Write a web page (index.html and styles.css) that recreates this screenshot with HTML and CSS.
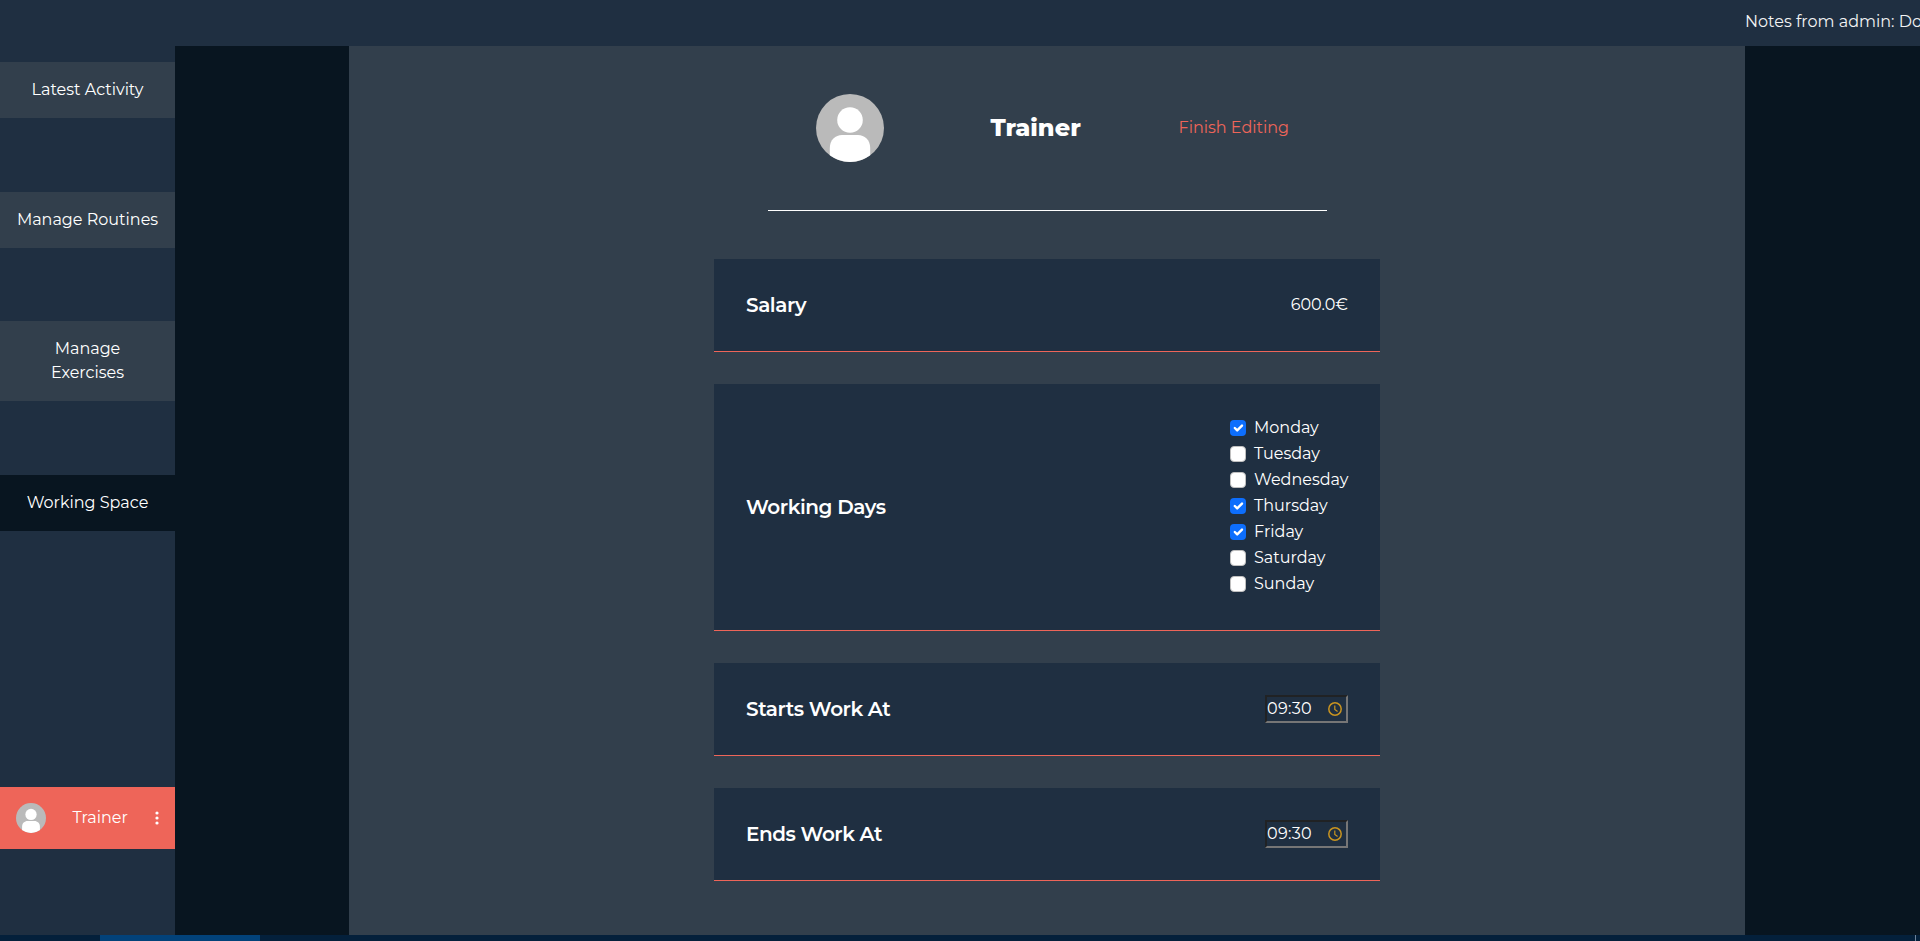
FILE: index.html
```html
<!DOCTYPE html>
<html lang="en">
<head>
<meta charset="utf-8">
<title>Working Space</title>
<link rel="stylesheet" href="styles.css">
</head>
<body>
<svg class="defs" aria-hidden="true">
  <symbol id="avatar" viewBox="0 0 68 68">
    <circle cx="34" cy="34" r="34" fill="#bababa"/>
    <circle cx="34" cy="26" r="12.800" fill="#fff"/>
    <path d="M13.800 61.300V54C13.800 46 19.500 41 26 41H42C48.500 41 54.200 46 54.200 54V61.300A34 34 0 0 1 13.800 61.300Z" fill="#fff"/>
  </symbol>
  <symbol id="clock" viewBox="0 0 14 14">
    <circle cx="7" cy="7" r="6.200" fill="none" stroke="#c99420" stroke-width="1.500"/>
    <path d="M6.800 3.500V7.400L9.600 9.400" fill="none" stroke="#c99420" stroke-width="1.200"/>
  </symbol>
  <symbol id="tick" viewBox="0 0 20 20">
    <path d="M6 10l3 3l6-6" fill="none" stroke="#fff" stroke-width="3" stroke-linecap="round" stroke-linejoin="round"/>
  </symbol>
</svg>
<div class="app">
  <header class="topbar"><div class="ticker">Notes from admin: Do</div></header>
  <div class="body">
    <nav class="sidebar">
      <a class="nav-item">Latest Activity</a>
      <a class="nav-item">Manage Routines</a>
      <a class="nav-item"><span>Manage</span><span>Exercises</span></a>
      <a class="nav-item active">Working Space</a>
      <div class="user">
        <svg class="user-avatar"><use href="#avatar"/></svg>
        <span class="user-name">Trainer</span>
        <svg class="dots" viewBox="0 0 4 14"><circle cx="2" cy="2" r="1.600"/><circle cx="2" cy="7" r="1.600"/><circle cx="2" cy="12" r="1.600"/></svg>
      </div>
    </nav>
    <main class="content">
      <section class="profile">
        <svg class="profile-avatar"><use href="#avatar"/></svg>
        <h1>Trainer</h1>
        <a class="finish">Finish Editing</a>
      </section>
      <section class="card"><h2>Salary</h2><span>600.0€</span></section>
      <section class="card days-card"><h2>Working Days</h2>
        <ul class="days">
          <li><svg class="check on"><use href="#tick"/></svg>Monday</li>
          <li><svg class="check"></svg>Tuesday</li>
          <li><svg class="check"></svg>Wednesday</li>
          <li><svg class="check on"><use href="#tick"/></svg>Thursday</li>
          <li><svg class="check on"><use href="#tick"/></svg>Friday</li>
          <li><svg class="check"></svg>Saturday</li>
          <li><svg class="check"></svg>Sunday</li>
        </ul>
      </section>
      <section class="card"><h2>Starts Work At</h2><div class="time"><span>09:30</span><svg><use href="#clock"/></svg></div></section>
      <section class="card"><h2>Ends Work At</h2><div class="time"><span>09:30</span><svg><use href="#clock"/></svg></div></section>
    </main>
  </div>
  <footer class="taskbar"><div class="task"></div><div class="edge"></div></footer>
</div>
</body>
</html>
```
FILE: styles.css
```css
* { box-sizing: border-box; }
body { margin: 0; overflow: hidden; color: #fff; font: 400 16px/24px Montserrat, Inter, sans-serif; }
h1, h2, ul { margin: 0; padding: 0; }
.defs { display: block; width: 0; height: 0; }
.app { display: flex; flex-direction: column; width: 1920px; height: 941px; background: #081520; overflow: hidden; }
.topbar { height: 46px; flex: none; background: #1f2f41; overflow: hidden; }
.ticker { margin-left: 1745px; padding-top: 10px; white-space: nowrap; color: #f2f3f4; }
.body { display: flex; height: 889px; flex: none; }
.sidebar { width: 175px; flex: none; padding-top: 16px; background: #1f2f41; display: flex; flex-direction: column; }
.nav-item { display: flex; flex-direction: column; align-items: center; padding: 16px 0; margin-bottom: 74px; background: #323f4c; white-space: nowrap; }
.nav-item:nth-child(2) { margin-bottom: 73px; }
.nav-item.active { background: #081520; margin-bottom: 256px; }
.user { height: 62px; background: #ee6559; display: flex; align-items: center; padding: 0 16px; }
.user-avatar { width: 30px; height: 30px; flex: none; }
.user-name { margin-left: 26.5px; width: 56px; }
.dots { width: 4px; height: 14px; margin-left: 26.5px; fill: #fff; flex: none; }
.content { width: 1396px; margin-left: 174px; background: #323f4c; display: flex; flex-direction: column; align-items: center; gap: 32px; }
.profile { width: 559px; height: 165px; padding: 48px 0 0 48px; margin-bottom: 16px; border-bottom: 1px solid #fff; display: flex; align-items: flex-start; }
.profile-avatar { width: 68px; height: 68px; flex: none; }
.profile h1 { width: 188px; margin-left: 107px; font-size: 24px; font-weight: 800; line-height: 30px; padding-top: 19px; }
.finish { color: #ee6559; padding-top: 22px; white-space: nowrap; }
.card { width: 666px; height: 93px; padding: 0 32px; background: #1f2f41; border-bottom: 1px solid #ee6559; display: flex; align-items: center; justify-content: space-between; white-space: nowrap; }
.card h2 { font-size: 20px; font-weight: 600; line-height: 24px; letter-spacing: -0.43px; }
.days-card { height: 247px; }
.days { list-style: none; width: 118px; }
.days li { height: 26px; display: flex; gap: 8px; }
.check { width: 16px; height: 16px; margin-top: 4px; flex: none; background: #fff; border: 1px solid #bfbfbf; border-radius: 4px; }
.check.on { background: #0d6efd; border: 0; }
.time { width: 83px; height: 28px; border: 2px solid; border-color: #202224 #767676 #767676 #202224; display: flex; align-items: center; justify-content: space-between; padding-right: 4px; letter-spacing: 0.3px; }
.time svg { width: 14px; height: 14px; }
.taskbar { height: 6px; flex: none; background: #04203b; display: flex; justify-content: space-between; padding: 0 4px 0 100px; }
.task { width: 160px; background: #02427a; }
.edge { width: 1px; background: #70849a; }
```
